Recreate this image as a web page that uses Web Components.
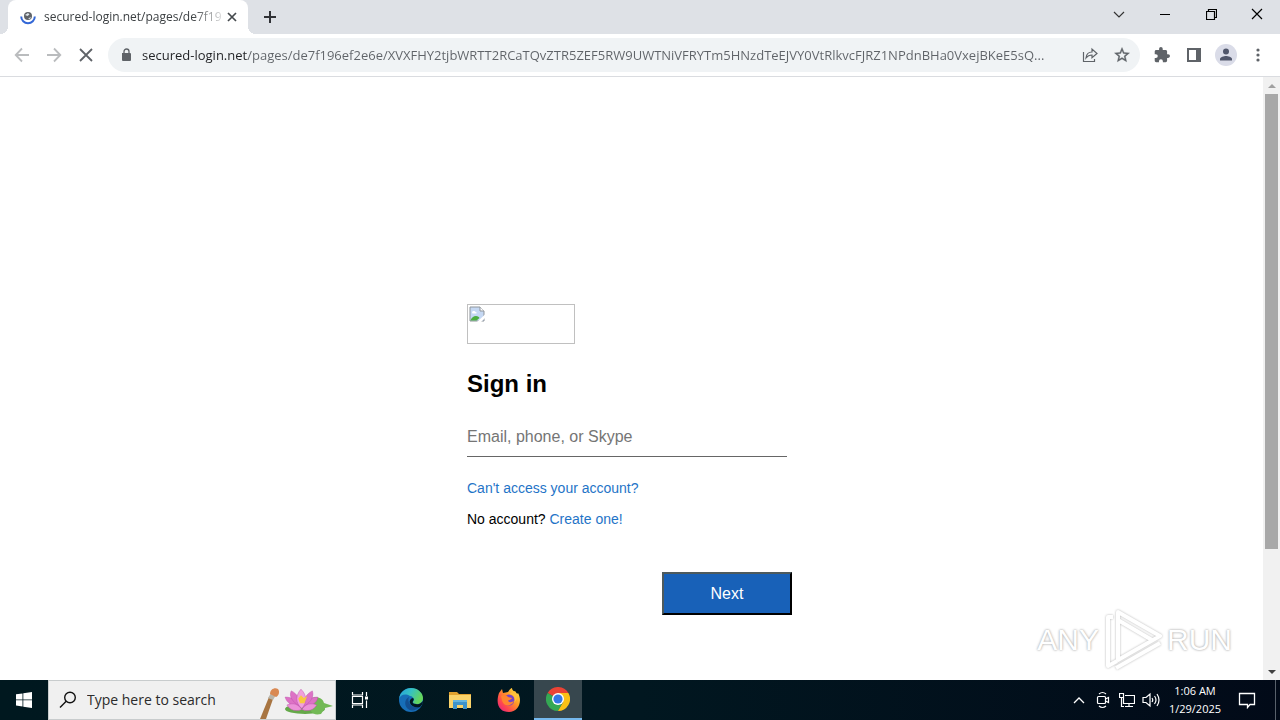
<!DOCTYPE html>
<html lang="en">
<head>
<meta charset="utf-8">
<title>Sign in</title>
<style>
html,body{margin:0;height:100%}
body{font-family:"Open Sans","Noto Sans",sans-serif;font-size:12px;background:#fff;color:#000}
</style>
</head>
<body>
<desktop-screen></desktop-screen>
<script>
function define(name, html) {
  const t = document.createElement('template');
  t.innerHTML = '<style>*{box-sizing:border-box}button{font:inherit;color:inherit;background:none;border:0;padding:0;margin:0;display:grid;place-items:center}svg{display:block}</style>' + html;
  customElements.define(name, class extends HTMLElement {
    constructor() {
      super();
      this.attachShadow({mode: 'open'}).append(t.content.cloneNode(true));
    }
  });
}

define('tab-strip', `
<style>
:host{display:flex;height:34px;background:#dee1e6;padding-left:8px;color:#202124}
.tab{position:relative;width:240px;background:#fff;border-radius:8px 8px 0 0;display:flex;align-items:center;padding:0 8px 0 12px}
.tab::before,.tab::after{content:"";position:absolute;bottom:0;width:8px;height:8px}
.tab::before{left:-8px;background:radial-gradient(circle at 0 0,#dee1e6 8px,#fff 8px)}
.tab::after{right:-8px;background:radial-gradient(circle at 100% 0,#dee1e6 8px,#fff 8px)}
.title{flex:1;min-width:0;margin-left:8px;white-space:nowrap;font-size:12px;line-height:16px;color:#3c4043;-webkit-mask:linear-gradient(to right,#000 148px,transparent 184px)}
.close{width:16px;height:16px}
.new{width:44px;height:34px}
.win{display:flex;margin-left:auto}
.win button{width:46px;height:28px}
</style>
<div class="tab">
<svg width="16" height="16" viewBox="0 0 16 16"><circle cx="8" cy="7" r="4" fill="#5f6368"/><path d="M5 6l3-2 1.500 1.500L7.500 7zM8 9.500l3-1.500-1 2z" fill="#dfe6ea"/><path d="M1.200 7.500a6.800 6.800 0 0 0 13.600 0" fill="none" stroke="#3367d6" stroke-width="2"/></svg>
<span class="title">secured-login.net/pages/de7f19</span>
<button class="close" aria-label="Close tab"><svg width="16" height="16" viewBox="0 0 16 16" stroke="#45494d" stroke-width="1.700"><path d="M4 4l8 8M12 4l-8 8"/></svg></button>
</div>
<button class="new" aria-label="New tab"><svg width="14" height="14" viewBox="0 0 14 14" stroke="#303236" stroke-width="2"><path d="M7 1v12M1 7h12"/></svg></button>
<div class="win">
<button aria-label="Search tabs"><svg width="12" height="12" viewBox="0 0 12 12" fill="none" stroke="#333" stroke-width="1.200"><path d="M1 4l5 5 5-5"/></svg></button>
<button aria-label="Minimize"><svg width="10" height="10" viewBox="0 0 10 10"><path d="M0 5h10v1H0z"/></svg></button>
<button aria-label="Restore"><svg width="11" height="11" viewBox="0 0 11 11" fill="none" stroke="#000" stroke-width="1.200"><path d="M.5 2.500h8v8h-8zM2.500 2.500v-2h8v8h-2"/></svg></button>
<button aria-label="Close"><svg width="12" height="12" viewBox="0 0 12 12" stroke="#000" stroke-width="1.200"><path d="M1 1l10 10M11 1L1 11"/></svg></button>
</div>`);

define('tool-bar', `
<style>
:host{display:flex;align-items:center;height:43px;padding:0 6px;background:#fff;border-bottom:1px solid #dadce0;color:#5f6368}
button{width:32px;height:32px;flex:none}
.box{flex:1;min-width:0;height:34px;margin:0 6px;border-radius:17px;background:#f0f3f5;display:flex;align-items:center;padding:0 2px 0 10px}
.box>svg{flex:none}
input{flex:1;min-width:0;border:0;outline:0;margin:0 0 0 8px;padding:0;height:24px;font:13px/24px "Open Sans","Noto Sans",sans-serif;color:#5f6368;-webkit-text-fill-color:transparent;background:linear-gradient(to right,#202124 106px,#5f6368 106px);-webkit-background-clip:text;background-clip:text}
</style>
<button aria-label="Back"><svg width="16" height="16" viewBox="0 0 16 16" fill="none" stroke="#babcbe" stroke-width="1.800"><path d="M15 8H2M8 1.500L1.700 8 8 14.500"/></svg></button>
<button aria-label="Forward"><svg width="16" height="16" viewBox="0 0 16 16" fill="none" stroke="#babcbe" stroke-width="1.800"><path d="M1 8h13M8 1.500L14.300 8 8 14.500"/></svg></button>
<button aria-label="Stop"><svg width="14" height="14" viewBox="0 0 14 14" stroke="#5f6368" stroke-width="1.800"><path d="M1 1l12 12M13 1L1 13"/></svg></button>
<div class="box">
<svg width="16" height="16" viewBox="0 0 16 16"><path d="M4 6h8a1 1 0 0 1 1 1v6a1 1 0 0 1-1 1H5a1 1 0 0 1-1-1z" fill="#5f6368"/><path d="M6 6.500V4.500a2.500 2.500 0 0 1 5 0v2" fill="none" stroke="#5f6368" stroke-width="1.300"/></svg>
<input aria-label="Address" spellcheck="false" value="secured-login.net/pages/de7f196ef2e6e/XVXFHY2tjbWRTT2RCaTQvZTR5ZEF5RW9UWTNiVFRYTm5HNzdTeEJVY0VtRlkvcFJRZ1NPdnBHa0VxejBKeE5sQ...">
<button aria-label="Share"><svg width="16" height="16" viewBox="0 0 16 16" fill="none" stroke="#5f6368" stroke-width="1.200"><path d="M1.500 5v9.500h11V12M4 11c.4-4 3-6 6-6V2l5 4.500-5 4.300V8C7.500 8 5.500 9 4 11z"/></svg></button>
<button aria-label="Bookmark"><svg width="18" height="18" viewBox="0 0 24 24" fill="#5f6368" stroke="#5f6368" stroke-width=".5"><path d="M22 9.240l-7.190-.620L12 2 9.190 8.630 2 9.240l5.460 4.730L5.820 21 12 17.270 18.180 21l-1.630-7.030L22 9.240zM12 15.400l-3.760 2.270 1-4.280-3.320-2.880 4.380-.38L12 6.100l1.710 4.040 4.380.38-3.320 2.880 1 4.280L12 15.400z"/></svg></button>
</div>
<button aria-label="Extensions"><svg width="16" height="16" viewBox="1 1 22 22" fill="#5f6368"><path d="M20.500 11H19V7c0-1.100-.9-2-2-2h-4V3.500a2.500 2.500 0 0 0-5 0V5H4c-1.100 0-2 .9-2 2v3.800h1.500a2.700 2.700 0 0 1 0 5.400H2V20c0 1.100.9 2 2 2h3.800v-1.500a2.700 2.700 0 0 1 5.400 0V22H17c1.100 0 2-.9 2-2v-4h1.500a2.500 2.500 0 0 0 0-5z"/></svg></button>
<button aria-label="Side panel"><svg width="14" height="14" viewBox="0 0 14 14"><path d="M0 0h14v14H0zM2 2v10h7V2z" fill="#5f6368" fill-rule="evenodd"/></svg></button>
<button aria-label="Profile"><svg width="22" height="22" viewBox="0 0 22 22"><circle cx="11" cy="11" r="11" fill="#dadce8"/><circle cx="11" cy="7.500" r="3" fill="#50566b"/><path d="M5 16.500v-1.500c0-2 4-3 6-3s6 1 6 3v1.500z" fill="#50566b"/></svg></button>
<button aria-label="Menu"><svg width="4" height="14" viewBox="0 0 4 14" fill="#5f6368"><circle cx="2" cy="2" r="1.600"/><circle cx="2" cy="7" r="1.600"/><circle cx="2" cy="12" r="1.600"/></svg></button>`);

define('scroll-bar', `
<style>
:host{display:flex;flex-direction:column;width:17px;background:#f1f1f1}
button{width:17px;height:17px;flex:none}
.track{flex:1;display:flex;flex-direction:column;padding:0 2px}
.thumb{height:80%;background:#a8a8a8}
</style>
<button aria-label="Scroll up"><svg width="8" height="4" viewBox="0 0 8 4"><path d="M4 0l4 4H0z" fill="#a0a0a0"/></svg></button>
<div class="track"><div class="thumb"></div></div>
<button aria-label="Scroll down"><svg width="8" height="4" viewBox="0 0 8 4"><path d="M0 0h8L4 4z" fill="#404040"/></svg></button>`);

define('sign-in-form', `
<style>
:host{display:block;width:100%;max-width:329px;margin:0 auto;padding-top:227px;font-family:"Liberation Sans",Arial,sans-serif;font-size:14px;line-height:17px}
.logo{width:108px;height:40px;border:1px solid #c0c0c0;padding:1px}
h1{margin:26px 0 0;font-size:24px;line-height:28px}
input{display:block;width:320px;max-width:100%;height:40px;margin-top:19px;padding:0;border:0;border-bottom:1px solid #666;outline:0;font:16px/20px "Liberation Sans",Arial,sans-serif;background:none}
input::placeholder{color:#757575;opacity:1}
p{margin:0}
.first{margin-top:23px}
.second{margin-top:14px}
a{color:#1f74c7;text-decoration:none}
button{width:130px;height:43px;margin:44px 4px 0 auto;border:2px solid;border-color:#4d5a5e #000 #000 #4d5a5e;background:#1861b8;color:#fff;font-size:16px}
</style>
<div class="logo" role="img" aria-label="Logo"><svg width="16" height="16" viewBox="0 0 16 16"><path d="M1 1h10l4 4v10H1z" fill="#c5d8f3" stroke="#8f959b"/><path d="M11 1v4h4" fill="#fff" stroke="#8f959b"/><path d="M3 6.500c0-2 3-2 3.500-.5 1.500 0 1.500 1.500.5 1.500H3.500z" fill="#fff"/><path d="M1.500 14.500c1-3 3-4.500 5.500-4.500 2 0 3 1 3.500 2l-3 2.500z" fill="#4cae3e"/><path d="M8 16l8-7.500V12l-4 4z" fill="#fff"/></svg></div>
<h1>Sign in</h1>
<input type="email" aria-label="Email, phone, or Skype" placeholder="Email, phone, or Skype">
<p class="first"><a href="#">Can't access your account?</a></p>
<p class="second">No account? <a href="#">Create one!</a></p>
<button type="submit">Next</button>`);

define('any-run-mark', `
<style>
:host{display:flex;align-items:center;gap:4px;color:#fff;font:30px/44px "Liberation Sans",Arial,sans-serif;text-shadow:0 0 2px #aaa,0 0 3px #ccc}
svg{filter:drop-shadow(0 0 1px #b5b5b5)}
</style>
<span>ANY</span>
<svg width="60" height="64" viewBox="0 0 60 64" fill="none" stroke="#fff" stroke-width="4" stroke-linejoin="round"><path d="M10 9H5v49l9-5"/><path d="M15 52V4l42 24-42 24V12l34 20"/><path d="M13 60l44-25"/></svg>
<span>RUN</span>`);

define('task-bar', `
<style>
:host{display:flex;height:40px;background:linear-gradient(to right,#00181f,#011720 50%,#020a18);color:#fff}
.start,.app{width:48px;height:40px;flex:none}
label{width:288px;height:40px;flex:none;display:flex;align-items:center;background:#f0f0f0;border:1px solid #c8cccd;padding-left:10px}
label svg{flex:none}
input{flex:1;min-width:0;border:0;outline:0;background:none;margin:0 0 0 10px;padding:0;font:14px/20px "Open Sans","Noto Sans",sans-serif}
input::placeholder{color:#2b2b2b;opacity:1}
.apps{display:flex;gap:1px;padding-left:3px}
.active{background:#37474e;border-bottom:2px solid #76b9ed}
.tray{display:flex;margin-left:auto}
.tray button{width:24px;height:40px}
.tray .clock{width:56px;margin-left:4px;font-size:11px;line-height:18px;white-space:nowrap;align-content:center}
.tray .note{width:48px}
.tray .show{width:5px;margin-left:4px;border-left:1px solid #59616b}
</style>
<button class="start" aria-label="Start"><svg width="16" height="16" viewBox="0 0 16 16" fill="#fff"><path d="M0 2.300L6.500 1.400V7.500H0zM7.300 1.300L16 0v7.500H7.300zM0 8.300h6.500v6.200L0 13.600zM7.300 8.300H16V16l-8.700-1.300z"/></svg></button>
<label><svg width="18" height="18" viewBox="0 0 18 18" fill="none" stroke="#111" stroke-width="1.400"><circle cx="11" cy="6.500" r="5.300"/><path d="M7.200 10.300L1 16.500"/></svg>
<input aria-label="Search" placeholder="Type here to search">
<svg width="76" height="38" viewBox="0 0 76 38"><path d="M1 38l9-22 4 2-7 20z" fill="#a87542"/><path d="M9 17l3-5 5 2-3 5z" fill="#b9b5aa"/><path d="M11 13c0-5 5-7 8-5 2 2 1 7-2 8z" fill="#d98953"/><ellipse cx="46" cy="28" rx="20" ry="5" fill="#65a94a"/><path d="M50 18c8-4 14-1 15 4l9 3-8 2-4 6c-8 2-13-2-12-15z" fill="#72b955"/><g transform="translate(5 2) scale(.88)"><g fill="#dd72c5" stroke="#b94ba9" stroke-width=".5"><path d="M43 28C27 26 25 19 24 16c9 0 15 5 19 12z"/><path d="M43 28c16-2 18-9 18-12-9 0-14 5-18 12z"/><path d="M43 28C29 20 29 13 31 9c7 3 11 11 12 19z"/><path d="M43 28c14-8 13-15 12-19-7 3-11 11-12 19z"/><path d="M43 29c-8-7-7-15-1-22 7 7 7 15 1 22z" fill="#f0a0dc"/><path d="M43 30c-7 3-13 1-17-5 7-3 13-1 17 5zM43 30c7 3 13 1 17-5-7-3-13-1-17 5z" fill="#ec91d8"/></g><path d="M39 18l3-4 3 3 4-2-3 8h-5z" fill="#f8c83f"/></g></svg></label>
<button class="app" aria-label="Task view"><svg width="18" height="18" viewBox="0 0 18 18" fill="none" stroke="#fff" stroke-width="1.200"><path d="M1.500 1v3h10V1M1.500 5.500h10v7h-10zM1.500 17v-3h10v3M15.500 1v4M15.500 9.500V17"/><path d="M14 5.500h3v3h-3z" fill="#fff" stroke="none"/></svg></button>
<div class="apps">
<button class="app" aria-label="Edge"><svg width="24" height="24" viewBox="0 0 24 24"><defs><linearGradient id="e1" x1="0" y1="0" x2="1" y2=".4"><stop offset="0" stop-color="#249fdf"/><stop offset=".5" stop-color="#35c1c4"/><stop offset="1" stop-color="#65d65b"/></linearGradient></defs><circle cx="12" cy="12" r="12" fill="#176eb8"/><path d="M0 11C1 4 6 0 12 0c7 0 12 5 12 10 0 4-3 6-6 6-3 0-4-1-4-2l1-2c0-2-2-4-4-4C6 5 1 7 0 11z" fill="url(#e1)"/><path d="M10 9c-4 2-5 7-2 11 3 4 9 3 14-2-4 2-9 1-11-2-2-2-2-5-1-7z" fill="#134f91"/><path d="M14 10c1 1 1 2 0 3-1 2 0 3 3 3 3 1 5-1 7-3 0 3-2 5-3 6-5 1-9-1-10-4-1-2 1-5 3-5z" fill="#011720"/></svg></button>
<button class="app" aria-label="File Explorer"><svg width="22" height="20" viewBox="0 0 22 20"><path d="M0 2h8l2 2h12v14H0z" fill="#e1a22f"/><path d="M0 5h22v13H0z" fill="#fad36a"/><path d="M4 19v-8l2-1h10l2 1v8h-4v-4H8v4z" fill="#3e93ca"/><path d="M4 10h14v2H4z" fill="#65b5df"/></svg></button>
<button class="app" aria-label="Firefox"><svg width="24" height="24" viewBox="0 0 24 24"><defs><linearGradient id="f1" x1="1" y1="0" x2="0" y2="1"><stop offset="0" stop-color="#fff34f"/><stop offset=".4" stop-color="#ff9a25"/><stop offset=".7" stop-color="#ff494d"/><stop offset="1" stop-color="#df168e"/></linearGradient></defs><path d="M2 5l3-4 1 4 5-1c2-3 3-4 4-4 0 3 3 3 5 6l1-1c5 9 0 19-9 19S-2 17 2 5z" fill="url(#f1)"/><circle cx="12" cy="12" r="5.500" fill="#7543c7"/><path d="M4 8c3-2 6-1 7 1l4 1c-1 2-4 2-4 3 2 2 4 1 6 0-2 6-11 6-12-1z" fill="#ff852f"/><path d="M12 6c5 0 7 4 5 9 4-4 4-9 1-12z" fill="#ffc13b"/></svg></button>
<button class="app active" aria-label="Chrome"><svg width="24" height="24" viewBox="0 0 24 24"><path d="M12 12L1.600 6A12 12 0 0 1 22.400 6z" fill="#ea4335"/><path d="M12 12L1.600 6A12 12 0 0 0 12 24l5-9z" fill="#34a853"/><path d="M12 6h10.400A12 12 0 0 1 12 24l5.200-9z" fill="#fbc116"/><circle cx="12" cy="12" r="6" fill="#fff"/><circle cx="12" cy="12" r="4.600" fill="#3478e5"/></svg></button>
</div>
<div class="tray">
<button aria-label="Hidden icons"><svg width="12" height="12" viewBox="0 0 12 12" fill="none" stroke="#fff" stroke-width="1.300"><path d="M1 9l5-5 5 5"/></svg></button>
<button aria-label="Meet now"><svg width="14" height="18" viewBox="0 0 14 18" fill="none" stroke="#fff" stroke-width="1.200"><rect x="1.500" y="5.500" width="8" height="7" rx="1"/><path d="M9.500 8l3-1.500v5l-3-1.500M3 3q3.500-3 7 0M3 15q3.500 3 7 0"/></svg></button>
<button aria-label="Network"><svg width="16" height="16" viewBox="0 0 16 16" fill="none" stroke="#fff" stroke-width="1.200"><path d="M6 3.500h9.500v8H4.500V6M10 11.500v3M6 14.500h8M.5 1.500h4v4h-4zM2.500 5.500v9H5"/></svg></button>
<button aria-label="Volume"><svg width="18" height="16" viewBox="0 0 18 16" fill="none" stroke="#fff" stroke-width="1.200"><path d="M1 5.500h3L8 2v12l-4-3.500H1zM10 6q1.500 2 0 4M12.500 4q3 4 0 8M15 2q4 6 0 12"/></svg></button>
<button class="clock"><span>1:06 AM</span><span>1/29/2025</span></button>
<button class="note" aria-label="Notifications"><svg width="18" height="18" viewBox="0 0 18 18" fill="none" stroke="#fff" stroke-width="1.300"><path d="M1.500 2.500h15v11H12L9.500 16.500V13.500h-8z"/></svg></button>
<button class="show" aria-label="Show desktop"></button>
</div>`);

define('desktop-screen', `
<style>
:host{display:flex;flex-direction:column;height:100vh;overflow:hidden}
tab-strip,tool-bar,task-bar{flex:none}
main{flex:1;min-height:0;display:flex;position:relative}
.page{flex:1;min-width:0;overflow:hidden}
any-run-mark{position:absolute;right:48px;bottom:8px}
</style>
<tab-strip></tab-strip>
<tool-bar></tool-bar>
<main><div class="page"><sign-in-form></sign-in-form></div><scroll-bar></scroll-bar><any-run-mark></any-run-mark></main>
<task-bar></task-bar>`);
</script>
</body>
</html>
